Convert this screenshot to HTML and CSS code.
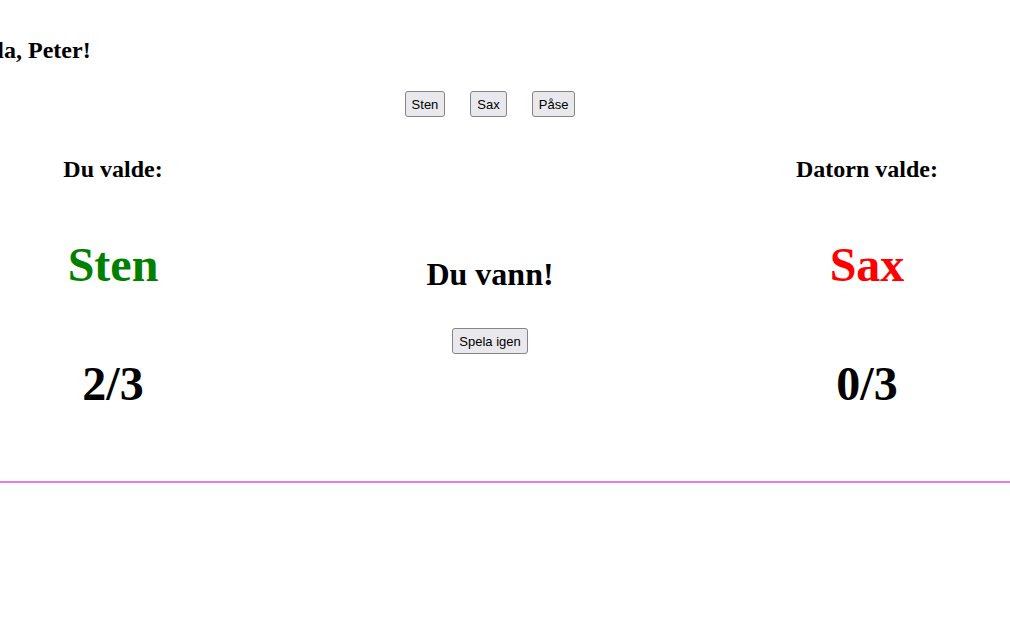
FILE: index.html
```html
<!DOCTYPE html>
<html lang="sv">
<head>
<meta charset="utf-8">
<title>Sten, Sax, Påse</title>
<link rel="stylesheet" href="styles.css">
</head>
<body>
<div class="page">
  <h2 class="title">Spela, Peter!</h2>
  <div class="choices">
    <button class="btn">Sten</button>
    <button class="btn">Sax</button>
    <button class="btn">Påse</button>
  </div>
  <div class="board">
    <div class="col">
      <h2 class="label">Du valde:</h2>
      <div class="pick win">Sten</div>
      <div class="score">2/3</div>
    </div>
    <div class="col middle">
      <h1 class="result">Du vann!</h1>
      <button class="btn">Spela igen</button>
    </div>
    <div class="col">
      <h2 class="label">Datorn valde:</h2>
      <div class="pick lose">Sax</div>
      <div class="score">0/3</div>
    </div>
  </div>
</div>
<div class="divider"></div>
</body>
</html>
```

FILE: styles.css
```css
html, body {
  margin: 0;
  padding: 0;
  background: #ffffff;
}

body {
  font-family: "Liberation Serif", "Times New Roman", serif;
  color: #000000;
  overflow: hidden;
}

.page {
  width: 980px;
}

.title {
  font-size: 24px;
  line-height: 28px;
  font-weight: bold;
  margin: 36px 0 0 -40px;
  white-space: nowrap;
}

.choices {
  display: flex;
  justify-content: center;
  gap: 25px;
  margin-top: 27px;
}

.btn {
  font-family: "Liberation Sans", Arial, sans-serif;
  font-size: 13px;
  line-height: 15px;
  padding: 5px 6px 4px 6px;
  border: 1px solid #858585;
  border-radius: 3px;
  background: #e9e9ed;
  color: #000000;
  margin: 0;
}

.board {
  display: grid;
  grid-template-columns: 226px 1fr 226px;
  margin-top: 38px;
}

.col {
  display: flex;
  flex-direction: column;
  align-items: center;
  text-align: center;
}

.label {
  font-size: 24px;
  line-height: 28px;
  font-weight: bold;
  margin: 0;
  white-space: nowrap;
}

.pick {
  font-size: 48px;
  line-height: 56px;
  font-weight: bold;
  margin-top: 54px;
}

.win { color: #008000; }
.lose { color: #ff0000; }

.score {
  font-size: 48px;
  line-height: 56px;
  font-weight: bold;
  margin-top: 63px;
}

.middle {
  padding-top: 101px;
}

.result {
  font-size: 32px;
  line-height: 37px;
  font-weight: bold;
  margin: 0 0 35px 0;
}

.divider {
  margin-top: 69px;
  height: 2px;
  background: #e27ee4;
}
```
